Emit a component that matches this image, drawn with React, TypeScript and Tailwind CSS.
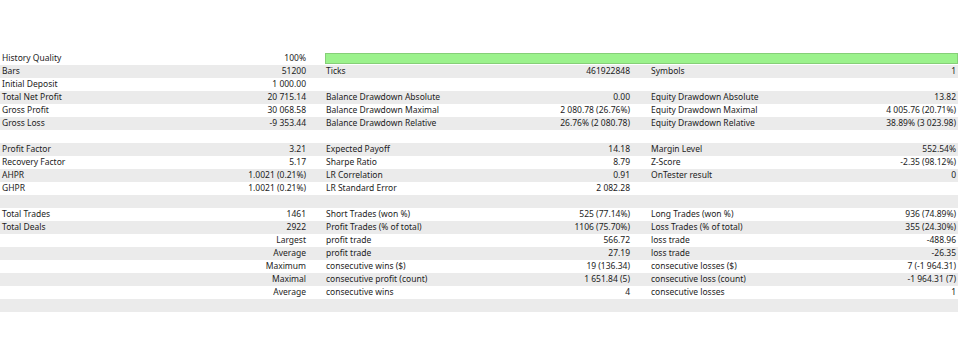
type Cell = { label?: string; value?: string };
type Row = { a?: Cell; b?: Cell; c?: Cell; bar?: boolean };

const rows: Row[] = [
    { a: { label: "History Quality", value: "100%" }, bar: true },
    {
        a: { label: "Bars", value: "51200" },
        b: { label: "Ticks", value: "461922848" },
        c: { label: "Symbols", value: "1" },
    },
    { a: { label: "Initial Deposit", value: "1 000.00" } },
    {
        a: { label: "Total Net Profit", value: "20 715.14" },
        b: { label: "Balance Drawdown Absolute", value: "0.00" },
        c: { label: "Equity Drawdown Absolute", value: "13.82" },
    },
    {
        a: { label: "Gross Profit", value: "30 068.58" },
        b: { label: "Balance Drawdown Maximal", value: "2 080.78 (26.76%)" },
        c: { label: "Equity Drawdown Maximal", value: "4 005.76 (20.71%)" },
    },
    {
        a: { label: "Gross Loss", value: "-9 353.44" },
        b: { label: "Balance Drawdown Relative", value: "26.76% (2 080.78)" },
        c: { label: "Equity Drawdown Relative", value: "38.89% (3 023.98)" },
    },
    {},
    {
        a: { label: "Profit Factor", value: "3.21" },
        b: { label: "Expected Payoff", value: "14.18" },
        c: { label: "Margin Level", value: "552.54%" },
    },
    {
        a: { label: "Recovery Factor", value: "5.17" },
        b: { label: "Sharpe Ratio", value: "8.79" },
        c: { label: "Z-Score", value: "-2.35 (98.12%)" },
    },
    {
        a: { label: "AHPR", value: "1.0021 (0.21%)" },
        b: { label: "LR Correlation", value: "0.91" },
        c: { label: "OnTester result", value: "0" },
    },
    {
        a: { label: "GHPR", value: "1.0021 (0.21%)" },
        b: { label: "LR Standard Error", value: "2 082.28" },
    },
    {},
    {
        a: { label: "Total Trades", value: "1461" },
        b: { label: "Short Trades (won %)", value: "525 (77.14%)" },
        c: { label: "Long Trades (won %)", value: "936 (74.89%)" },
    },
    {
        a: { label: "Total Deals", value: "2922" },
        b: { label: "Profit Trades (% of total)", value: "1106 (75.70%)" },
        c: { label: "Loss Trades (% of total)", value: "355 (24.30%)" },
    },
    {
        a: { value: "Largest" },
        b: { label: "profit trade", value: "566.72" },
        c: { label: "loss trade", value: "-488.96" },
    },
    {
        a: { value: "Average" },
        b: { label: "profit trade", value: "27.19" },
        c: { label: "loss trade", value: "-26.35" },
    },
    {
        a: { value: "Maximum" },
        b: { label: "consecutive wins ($)", value: "19 (136.34)" },
        c: { label: "consecutive losses ($)", value: "7 (-1 964.31)" },
    },
    {
        a: { value: "Maximal" },
        b: { label: "consecutive profit (count)", value: "1 651.84 (5)" },
        c: { label: "consecutive loss (count)", value: "-1 964.31 (7)" },
    },
    {
        a: { value: "Average" },
        b: { label: "consecutive wins", value: "4" },
        c: { label: "consecutive losses", value: "1" },
    },
    {},
];

const Pair = ({ cell, className }: { cell?: Cell; className: string }) => (
    <div className={"flex justify-between " + className}>
        <span>{cell?.label}</span>
        <span>{cell?.value}</span>
    </div>
);

export default function App() {
    return (
        <div
            className="h-[360px] w-[960px] bg-white pt-[52px] text-[8.5px] leading-[12px] text-[#1c1c1c]"
            style={{ fontFamily: '"Noto Sans", "Open Sans", sans-serif' }}
        >
            {rows.map((row, i) => (
                <div
                    key={i}
                    className={
                        "flex h-[13px] w-[958px] " +
                        (i % 2 === 1 ? "bg-[#ebebeb]" : "bg-white")
                    }
                >
                    <Pair cell={row.a} className="w-[325px] pl-[2px] pr-[19px]" />
                    {row.bar ? (
                        <div className="flex flex-1 items-center py-[1px]">
                            <div className="h-[11px] w-full border border-[#86cf78] bg-[#9bf28c]" />
                        </div>
                    ) : (
                        <>
                            <Pair cell={row.b} className="w-[325px] pl-[1px] pr-[20px]" />
                            <Pair cell={row.c} className="flex-1 pl-[1px] pr-[2px]" />
                        </>
                    )}
                </div>
            ))}
        </div>
    );
}
